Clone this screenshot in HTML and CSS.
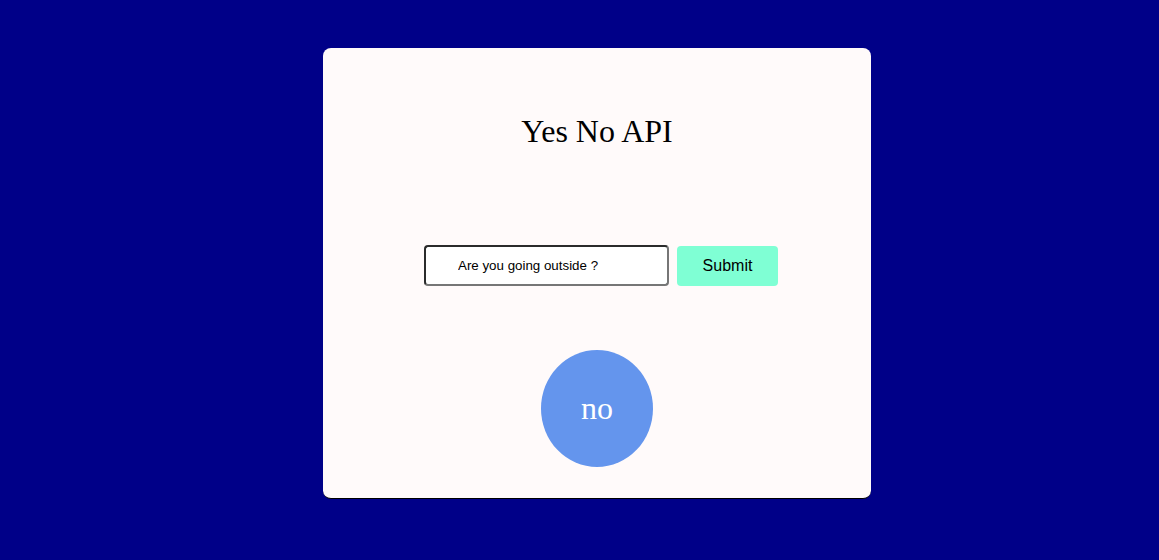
FILE: index.html
```html
<!DOCTYPE html>
<html>
<head>
<meta charset="utf-8">
<link rel="stylesheet" href="styles.css">
</head>
<body>
<div class="card">
  <h1 class="title">Yes No API</h1>
  <form class="ask">
    <input class="question" type="text" value="Are you going outside ?">
    <button class="submit" type="button">Submit</button>
  </form>
  <div class="answer">no</div>
</div>
</body>
</html>
```
FILE: styles.css
```css
html, body {
  margin: 0;
  padding: 0;
  background: #000088;
  height: 100%;
}
body {
  padding: 48px 0 0 323px;
  box-sizing: border-box;
}
.card {
  width: 548px;
  height: 451px;
  box-sizing: border-box;
  background: #fffafa;
  border-radius: 8px;
  border-bottom: 1px solid #000;
  padding-top: 65px;
  display: flex;
  flex-direction: column;
  align-items: center;
  font-family: "Liberation Serif", serif;
}
.title {
  margin: 0;
  font-size: 32px;
  font-weight: normal;
  line-height: 37px;
  height: 37px;
  color: #000;
}
.ask {
  margin: 95px 0 0 8px;
  display: flex;
  gap: 8px;
  height: 41px;
  align-items: flex-start;
}
.question {
  width: 245px;
  height: 41px;
  box-sizing: border-box;
  border: 2px solid;
  border-color: #2b2b2b #767676 #767676 #2b2b2b;
  border-radius: 4px;
  background: #fff;
  padding: 0 0 0 32px;
  font-family: "Liberation Sans", Arial, sans-serif;
  font-size: 13.33px;
  color: #000;
  outline: none;
}
.submit {
  margin-top: 1px;
  width: 101px;
  height: 40px;
  border: none;
  border-radius: 4px;
  background: #7fffd4;
  font-family: "Liberation Sans", Arial, sans-serif;
  font-size: 16px;
  color: #000;
  padding: 0;
}
.answer {
  margin-top: 64px;
  width: 112px;
  height: 117px;
  border-radius: 50%;
  background: #6495ed;
  color: #fff;
  font-size: 32px;
  display: flex;
  align-items: center;
  justify-content: center;
}
```
